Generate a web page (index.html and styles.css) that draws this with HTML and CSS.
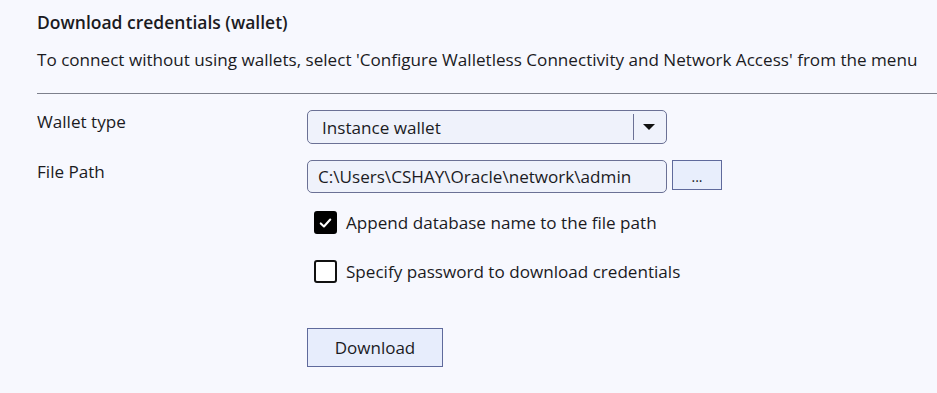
FILE: index.html
```html
<!DOCTYPE html>
<html>
<head>
<meta charset="utf-8">
<link rel="stylesheet" href="styles.css">
</head>
<body>
<div class="page">
  <h1 class="title">Download credentials (wallet)</h1>
  <p class="desc">To connect without using wallets, select 'Configure Walletless Connectivity and Network Access' from the menu</p>
  <hr class="divider">
  <div class="form">
    <div class="row">
      <div class="label">Wallet type</div>
      <div class="select">
        <span class="select-text">Instance wallet</span>
        <span class="select-sep"></span>
        <span class="select-arrow"></span>
      </div>
    </div>
    <div class="row">
      <div class="label">File Path</div>
      <div class="path-group">
        <div class="input">C:\Users\CSHAY\Oracle\network\admin</div>
        <button class="browse">...</button>
      </div>
    </div>
    <div class="checks">
      <label class="check">
        <span class="box checked">
          <svg viewBox="0 0 22 22" width="22" height="22"><path d="M5.5 11.5 L9.2 15 L16.5 7" fill="none" stroke="#fff" stroke-width="2.4" stroke-linecap="round" stroke-linejoin="round"/></svg>
        </span>
        <span class="check-text">Append database name to the file path</span>
      </label>
      <label class="check">
        <span class="box"></span>
        <span class="check-text">Specify password to download credentials</span>
      </label>
    </div>
    <button class="download">Download</button>
  </div>
</div>
</body>
</html>
```
FILE: styles.css
```css
html, body {
  margin: 0;
  padding: 0;
  background: #f7f8fe;
}
body {
  font-family: "Open Sans", "Noto Sans", "Liberation Sans", sans-serif;
  color: #1b1b1f;
  font-size: 17.1px;
}
.page {
  padding: 10px 0 0 37px;
}
.title {
  margin: 0;
  font-size: 17.5px;
  font-weight: 600;
  line-height: 24px;
}
.desc {
  margin: 15px 0 0 0;
  line-height: 22px;
}
.divider {
  margin: 22px 0 0 0;
  border: 0;
  border-top: 1px solid #7d808c;
  height: 0;
}
.form {
  padding-top: 16px;
}
.row {
  display: flex;
  align-items: flex-start;
  margin-bottom: 16px;
}
.label {
  width: 270px;
  line-height: 22px;
  padding-top: 1px;
}
.select {
  width: 360px;
  height: 34px;
  box-sizing: border-box;
  border: 1px solid #6b7195;
  border-radius: 5px;
  background: #eff2fb;
  display: flex;
  align-items: center;
  padding-left: 14px;
}
.select-text {
  flex: 1;
}
.select-sep {
  width: 1px;
  height: 26px;
  background: #6b7195;
  margin-right: 9px;
}
.select-arrow {
  width: 0;
  height: 0;
  border-left: 6px solid transparent;
  border-right: 6px solid transparent;
  border-top: 6px solid #111;
  margin-right: 11px;
}
.path-group {
  display: flex;
  align-items: flex-start;
  gap: 5px;
}
.input {
  width: 360px;
  height: 33px;
  box-sizing: border-box;
  border: 1px solid #6b7195;
  border-radius: 5px;
  background: #eff2fb;
  padding-left: 10px;
  line-height: 31px;
}
.browse {
  width: 50px;
  height: 30px;
  box-sizing: border-box;
  border: 1.5px solid #5f6a9c;
  background: #e8eefc;
  font-family: inherit;
  font-size: 14px;
  color: #1b1b1f;
  padding: 3px 0 0 0;
  border-radius: 0;
}
.checks {
  margin-left: 277px;
  padding-top: 2px;
  display: flex;
  flex-direction: column;
  gap: 26px;
}
.check {
  display: flex;
  align-items: center;
  gap: 9px;
}
.box {
  width: 23px;
  height: 23px;
  box-sizing: border-box;
  border: 2px solid #111;
  border-radius: 3px;
  background: #fff;
  display: flex;
  align-items: center;
  justify-content: center;
}
.box.checked {
  background: #000;
  border-color: #000;
}
.box svg {
  display: block;
}
.check-text {
  line-height: 22px;
}
.download {
  margin: 45px 0 0 270px;
  width: 136px;
  height: 39px;
  box-sizing: border-box;
  border: 1.5px solid #5f6a9c;
  background: #e7edfc;
  font-family: inherit;
  font-size: 17px;
  color: #1b1b1f;
  border-radius: 0;
  display: block;
}
```
